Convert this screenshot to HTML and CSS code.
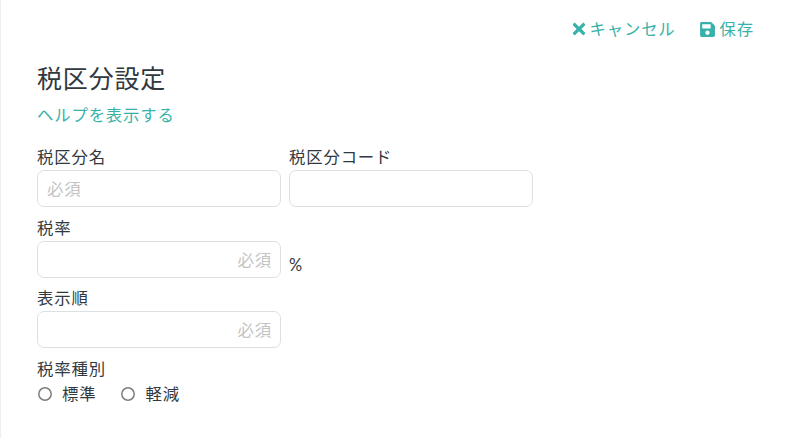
FILE: index.html
```html
<!DOCTYPE html>
<html lang="ja">
  <head>
    <meta charset="UTF-8" />
    <meta name="viewport" content="width=device-width, initial-scale=1.0" />
    <title>税区分設定</title>
    <link rel="stylesheet" href="styles.css">
  </head>
  <body>
    <div class="page">
      <div class="actions">
        <a class="action" href="#">
          <svg class="icon-times" viewBox="0 0 352 512"><path d="M242.72 256l100.07-100.07c12.28-12.28 12.28-32.19 0-44.48l-22.24-22.24c-12.28-12.28-32.19-12.28-44.48 0L176 189.28 75.93 89.21c-12.28-12.28-32.19-12.28-44.48 0L9.21 111.45c-12.28 12.28-12.28 32.19 0 44.48L109.28 256 9.21 356.07c-12.28 12.28-12.28 32.19 0 44.48l22.24 22.24c12.28 12.28 32.2 12.28 44.48 0L176 322.72l100.07 100.07c12.28 12.28 32.2 12.28 44.48 0l22.24-22.24c12.28-12.28 12.28-32.19 0-44.48L242.72 256z"/></svg>
          キャンセル
        </a>
        <a class="action" href="#">
          <svg class="icon-save" viewBox="0 0 448 512"><path d="M433.941 129.941l-83.882-83.882A48 48 0 0 0 316.118 32H48C21.49 32 0 53.49 0 80v352c0 26.51 21.49 48 48 48h352c26.51 0 48-21.49 48-48V163.882a48 48 0 0 0-14.059-33.941zM224 416c-35.346 0-64-28.654-64-64 0-35.346 28.654-64 64-64s64 28.654 64 64c0 35.346-28.654 64-64 64zm96-304.52V212c0 6.627-5.373 12-12 12H76c-6.627 0-12-5.373-12-12V108c0-6.627 5.373-12 12-12h228.52c3.183 0 6.235 1.264 8.485 3.515l3.48 3.48A11.996 11.996 0 0 1 320 111.48z"/></svg>
          保存
        </a>
      </div>

      <h2>税区分設定</h2>
      <a class="help" href="#">ヘルプを表示する</a>

      <form class="form">
        <div class="form-row">
          <div class="form-control">
            <label for="taxName">税区分名</label>
            <input type="text" id="taxName" placeholder="必須" />
          </div>
          <div class="form-control">
            <label for="taxCode">税区分コード</label>
            <input type="text" id="taxCode" />
          </div>
        </div>
        <div class="form-row">
          <div class="form-control">
            <label for="taxRate">税率</label>
            <input class="number" type="text" id="taxRate" placeholder="必須" />
          </div>
          <span class="unit">%</span>
        </div>
        <div class="form-row">
          <div class="form-control">
            <label for="sortOrder">表示順</label>
            <input class="number" type="text" id="sortOrder" placeholder="必須" />
          </div>
        </div>
        <div class="form-radio">
          <div class="radio-title">税率種別</div>
          <div class="radio-list">
            <label class="radio"><svg class="radio-mark" viewBox="0 0 14 14"><circle cx="7" cy="7" r="6.2" /></svg>標準</label>
            <label class="radio"><svg class="radio-mark" viewBox="0 0 14 14"><circle cx="7" cy="7" r="6.2" /></svg>軽減</label>
          </div>
        </div>
      </form>
    </div>
  </body>
</html>
```

FILE: styles.css
```css
* {
  box-sizing: border-box;
}

body {
  margin: 0;
  background-color: #fff;
  color: #31393f;
  font-family: Lato, "Noto Sans CJK JP", sans-serif;
  font-size: 16.4px;
  letter-spacing: 0.05em;
}

a {
  color: #37b2ab;
  text-decoration: none;
}

.page {
  height: 438px;
  border-left: 1px solid #eeeeee;
  padding: 17px 46px 0 36px;
  overflow: hidden;
}

.actions {
  display: flex;
  justify-content: flex-end;
  gap: 24px;
  height: 24px;
  line-height: 24px;
}

.action {
  display: flex;
  align-items: center;
}

.action svg {
  fill: #37b2ab;
}

.icon-times {
  width: 14px;
  height: 18px;
  margin-right: 4px;
}

.icon-save {
  width: 15px;
  height: 17px;
  margin-right: 5px;
}

h2 {
  margin: 19px 0 0;
  font-size: 25px;
  font-weight: 400;
  line-height: 36px;
}

.help {
  display: block;
  margin-top: 7px;
  line-height: 24px;
}

.form {
  margin-top: 19px;
}

.form-row {
  display: flex;
  gap: 8px;
  margin-bottom: 9.5px;
}

.form-control {
  width: 244px;
}

.form-control label {
  display: block;
  line-height: 22px;
  margin-bottom: 2px;
}

.form-control input {
  display: block;
  width: 100%;
  height: 37px;
  padding: 0 9px;
  border: 1px solid #dcdfe3;
  border-radius: 7px;
  outline: 0;
  font: inherit;
  letter-spacing: inherit;
}

.form-control input::placeholder {
  color: #c4c4c4;
  opacity: 1;
}

.form-control input.number {
  padding-right: 8px;
  text-align: right;
}

.unit {
  align-self: flex-end;
  line-height: 24px;
  margin-bottom: 1px;
}

.form-radio {
  line-height: 24px;
}

.radio-title {
  line-height: 22px;
  margin-bottom: 2px;
}

.radio-list {
  display: flex;
  gap: 25px;
  margin-top: 1px;
  padding-left: 1px;
}

.radio {
  display: flex;
  align-items: center;
  gap: 10px;
}

.radio-mark {
  width: 14px;
  height: 14px;
  fill: none;
  stroke: #7d7d7d;
  stroke-width: 1.5;
}
```
